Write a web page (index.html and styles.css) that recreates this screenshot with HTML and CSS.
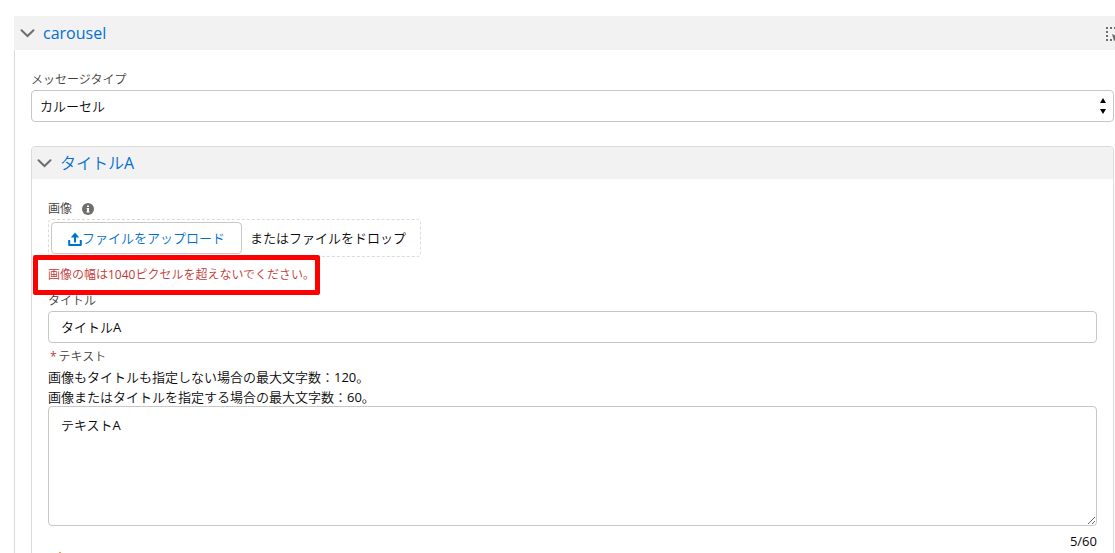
FILE: index.html
```html
<!DOCTYPE html>
<html lang="ja">
<head>
    <meta charset="UTF-8">
    <meta name="viewport" content="width=device-width, initial-scale=1.0">
    <title>carousel</title>
    <link rel="stylesheet" href="styles.css">
</head>
<body>
    <section class="message">
        <header class="section-header">
            <button type="button" class="toggle">
                <svg class="chevron" viewBox="0 0 14 14"><path d="M1 4.2 7 10 13 4.2"/></svg>
                <span>carousel</span>
            </button>
            <button type="button" class="select-area" aria-label="選択">
                <svg viewBox="0 0 20 16">
                    <path class="dots" d="M0 3h18M0 15h8M1 6v2M1 10v2M17 6v2"/>
                    <path class="pointer" d="M6 9l8 3-3 1 4 3-2 0-3-1-2 1z"/>
                </svg>
            </button>
        </header>
        <div class="section-body">
            <!-- メッセージタイプ -->
            <div class="field">
                <label for="messageType">メッセージタイプ</label>
                <div class="select-wrap">
                    <select id="messageType" name="messageType">
                        <option selected>カルーセル</option>
                    </select>
                    <svg class="select-arrows" viewBox="0 0 6 16"><path d="M0 5 3 0 6 5zM0 11h6L3 16z"/></svg>
                </div>
            </div>

            <!-- カラム -->
            <section class="panel">
                <header class="section-header">
                    <button type="button" class="toggle">
                        <svg class="chevron" viewBox="0 0 14 14"><path d="M1 4.2 7 10 13 4.2"/></svg>
                        <span>タイトルA</span>
                    </button>
                </header>
                <div class="panel-body">
                    <div class="field">
                        <div class="label-row">
                            <label for="upload">画像</label>
                            <svg class="info" viewBox="0 0 12 12"><circle cx="6" cy="6" r="6"/><path d="M5 2.5h2v1.6H5zM4.6 5H7v3.4h.6v1H4.4v-1H5V6h-.4z"/></svg>
                        </div>
                        <div class="dropzone">
                            <button type="button" id="upload" class="upload">
                                <svg viewBox="0 0 14 14"><path d="M1.2 8v5h11.6V8"/><path d="M7 10.5V4"/><path class="head" d="M7 .6 11.2 5.4H2.8z"/></svg>
                                <span>ファイルをアップロード</span>
                            </button>
                            <span>またはファイルをドロップ</span>
                        </div>
                        <div class="error">画像の幅は1040ピクセルを超えないでください。</div>
                    </div>
                    <div class="field">
                        <label for="title">タイトル</label>
                        <input type="text" id="title" name="title" value="タイトルA">
                    </div>
                    <div class="field text-field">
                        <label for="text"><span class="required">*</span>テキスト</label>
                        <p>画像もタイトルも指定しない場合の最大文字数：120。</p>
                        <p>画像またはタイトルを指定する場合の最大文字数：60。</p>
                        <textarea id="text" name="text">テキストA</textarea>
                        <div class="counter">5/60</div>
                    </div>
                    <div class="action-icon"></div>
                </div>
            </section>
        </div>
    </section>
</body>
</html>
```
FILE: styles.css
```css
:root {
    --link: #0070d2;
    --text: #080707;
    --label: #3e3e3c;
    --border: #c9c7c5;
    --line: #dddbda;
    --header: #f3f2f2;
    --error: #c23934;
}

*,
*::after {
    box-sizing: border-box;
}

body {
    margin: 0;
    overflow: hidden;
    background: #fff;
    color: var(--text);
    font-family: "Open Sans", "Noto Sans CJK JP DemiLight", "Noto Sans CJK JP", sans-serif;
    font-size: 13px;
    line-height: 20px;
}

button,
input,
select,
textarea {
    font: inherit;
    color: inherit;
}

/* 外枠は画面の右端より外まで続く */
.message {
    margin: 16px -16px 0 14px;
}

.section-header {
    display: flex;
    align-items: center;
    justify-content: space-between;
    height: 34px;
    padding: 0 5px;
    background: var(--header);
}

.toggle {
    display: flex;
    align-items: center;
    gap: 8px;
    padding: 0;
    border: 0;
    background: none;
    color: var(--link);
    font-size: 16px;
    line-height: 24px;
    cursor: pointer;
}

.message > .section-header {
    padding: 0 5px 0 6px;
}

.chevron {
    width: 15px;
    height: 14px;
    fill: none;
    stroke: #706e6b;
    stroke-width: 2;
    stroke-linecap: round;
}

.select-area {
    padding: 0;
    border: 0;
    background: none;
}

.select-area svg {
    display: block;
    width: 20px;
    height: 16px;
}

.dots {
    fill: none;
    stroke: #706e6b;
    stroke-width: 2;
    stroke-dasharray: 2 2;
}

.pointer {
    fill: #706e6b;
}

.section-body {
    padding: 20px 16px 0;
    border: 1px solid var(--line);
    border-width: 0 1px;
}

.field label {
    display: block;
    color: var(--label);
    font-size: 12px;
    line-height: 20px;
}

.select-wrap {
    position: relative;
}

select,
input,
textarea {
    display: block;
    width: 100%;
    border: 1px solid var(--border);
    border-radius: 4px;
    background: #fff;
}

select {
    appearance: none;
    height: 32px;
    padding: 0 24px 0 8px;
}

.select-arrows {
    position: absolute;
    top: 8px;
    right: 8px;
    width: 6px;
    height: 16px;
}

.panel {
    margin-top: 24px;
    border: 1px solid var(--line);
    border-radius: 4px 4px 0 0;
    overflow: hidden;
}

.panel .section-header {
    height: 32px;
}

.panel-body {
    padding: 20px 16px 0;
}

.label-row {
    display: flex;
    align-items: center;
    gap: 10px;
}

.info {
    width: 12px;
    height: 12px;
    fill: #706e6b;
}

.info path {
    fill: #fff;
}

.dropzone {
    display: flex;
    align-items: center;
    gap: 8px;
    width: fit-content;
    padding: 2px 14px 2px 2px;
    border: 1px dashed var(--line);
    border-radius: 4px;
}

.upload {
    display: flex;
    align-items: center;
    height: 32px;
    padding: 0 16px;
    border: 1px solid var(--border);
    border-radius: 4px;
    background: #fff;
    color: var(--link);
    cursor: pointer;
}

.upload svg {
    width: 14px;
    height: 14px;
    margin-top: 2px;
    fill: none;
    stroke: var(--link);
    stroke-width: 2;
    stroke-linejoin: round;
}

.upload .head {
    fill: var(--link);
    stroke: none;
}

.error {
    position: relative;
    padding: 8px 0 6px;
    color: var(--error);
    font-size: 12px;
}

/* エラーを囲む赤枠 */
.error::after {
    content: "";
    position: absolute;
    top: -2px;
    left: -15px;
    width: 287px;
    height: 40px;
    border: 5px solid #f00;
    border-radius: 2px;
}

input {
    height: 32px;
    padding: 0 12px 2px;
}

.text-field {
    margin-top: 4px;
}

.required {
    margin: 0 2px;
    color: var(--error);
}

.text-field p {
    margin: 0;
}

.text-field textarea {
    height: 120px;
    margin-top: -1px;
    padding: 8px 12px;
    resize: vertical;
}

.counter {
    margin-top: 5px;
    text-align: right;
}

.action-icon {
    width: 2px;
    height: 2px;
    margin: 1px 0 0 11px;
    background: #ff9a3c;
}
```
